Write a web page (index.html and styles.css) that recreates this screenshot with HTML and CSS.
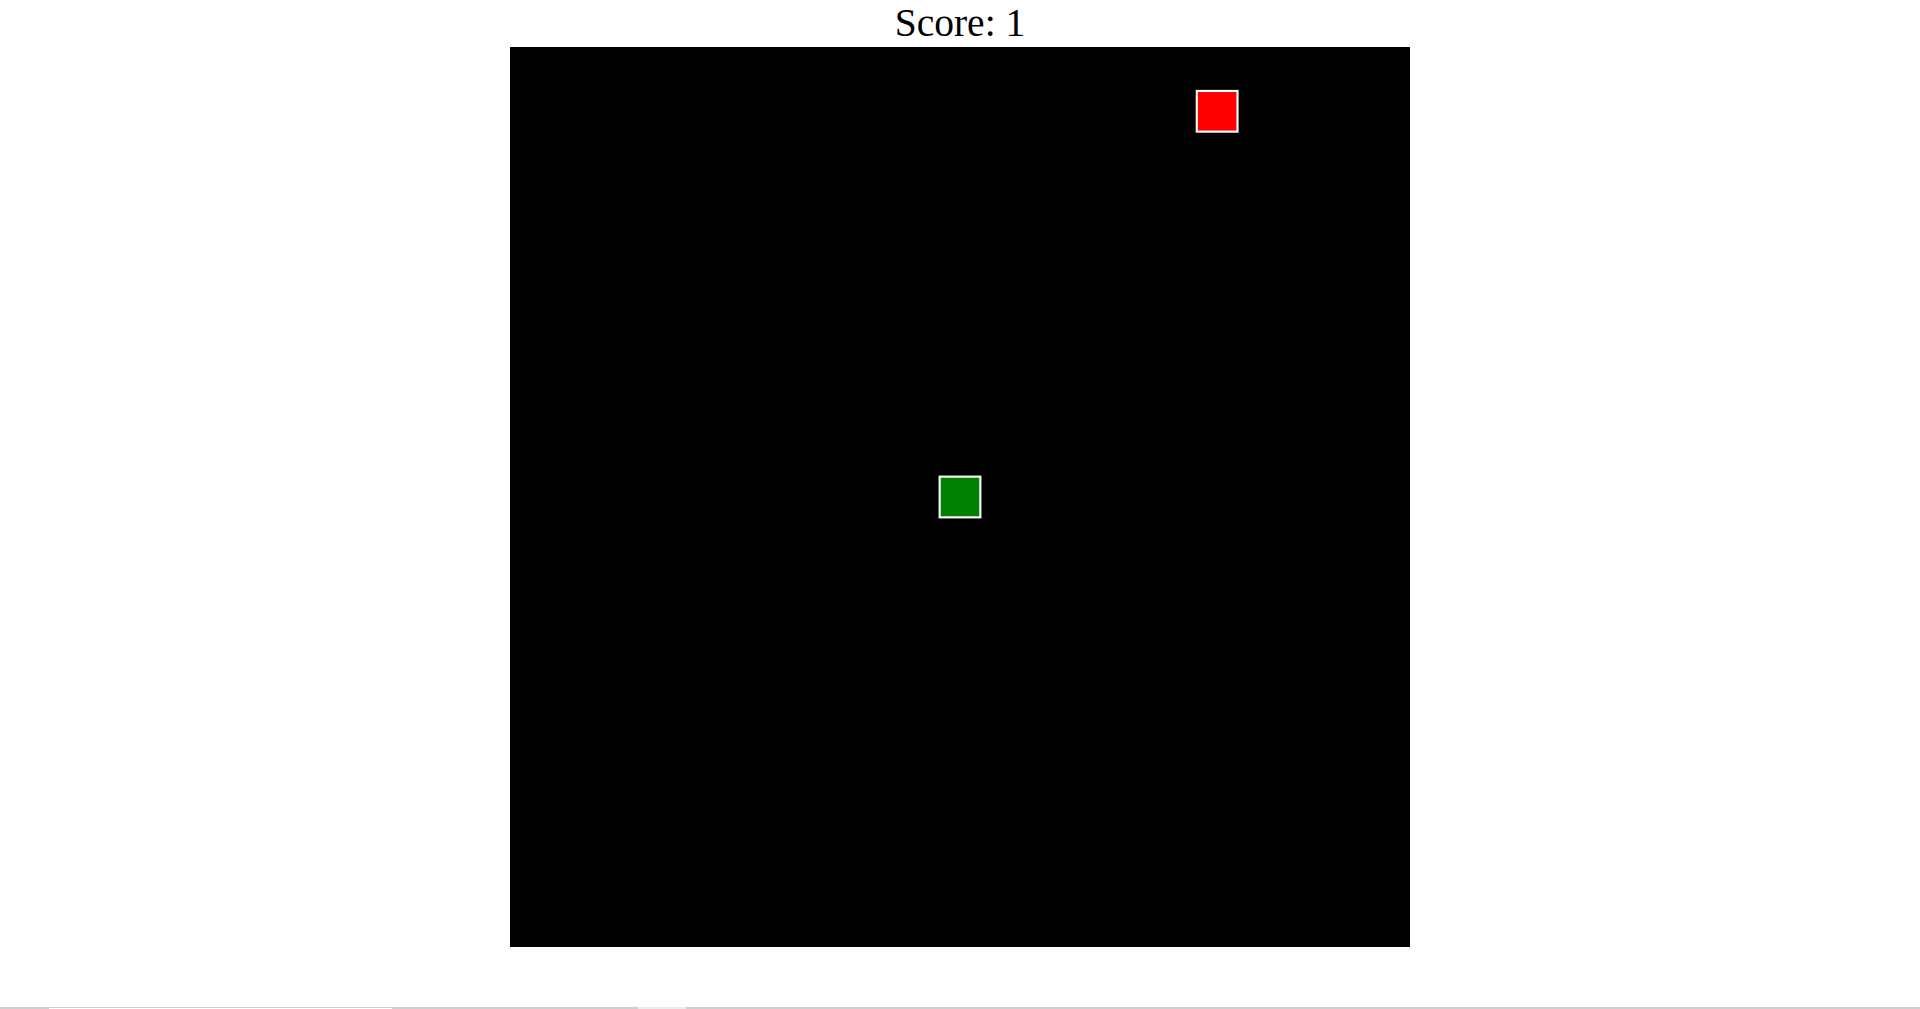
FILE: index.html
```html
<!DOCTYPE html>
<html>
<head>
<meta charset="utf-8">
<title>Snake</title>
<link rel="stylesheet" href="styles.css">
</head>
<body>
<div class="page">
  <div class="score">Score: 1</div>
  <div class="board">
    <svg class="board-svg" viewBox="0 0 420 420" width="900" height="900">
      <rect class="cell food" x="320.5" y="20.5" width="19" height="19"/>
      <rect class="cell snake" x="200.5" y="200.5" width="19" height="19"/>
    </svg>
  </div>
</div>
<div class="bottom-strip">
  <div class="seg seg-a"></div>
  <div class="seg seg-b"></div>
  <div class="seg seg-c"></div>
  <div class="seg seg-d"></div>
  <div class="seg seg-e"></div>
</div>
</body>
</html>
```
FILE: styles.css
```css
html, body {
  margin: 0;
  padding: 0;
  background: #fff;
  overflow: hidden;
}
.page {
  display: flex;
  flex-direction: column;
  align-items: center;
}
.score {
  font-family: "Liberation Serif", "Times New Roman", serif;
  font-size: 39.5px;
  line-height: 47px;
  color: #000;
}
.board {
  width: 900px;
  height: 900px;
  background: #000;
}
.board-svg {
  display: block;
}
.cell {
  stroke: #fff;
  stroke-width: 1;
}
.food { fill: #ff0000; }
.snake { fill: #008000; }
.bottom-strip {
  position: fixed;
  left: 0;
  right: 0;
  bottom: 0;
  height: 2px;
  display: flex;
}
.seg { height: 2px; }
.seg-a { width: 49px; background: #cfcfcf; }
.seg-b { width: 343px; background: #fff; border-top: 1px solid #cfcfcf; height: 1px; }
.seg-c { width: 246px; background: #cfcfcf; }
.seg-d { width: 48px; background: #ececec; }
.seg-e { flex: 1; background: #cfcfcf; }
```
